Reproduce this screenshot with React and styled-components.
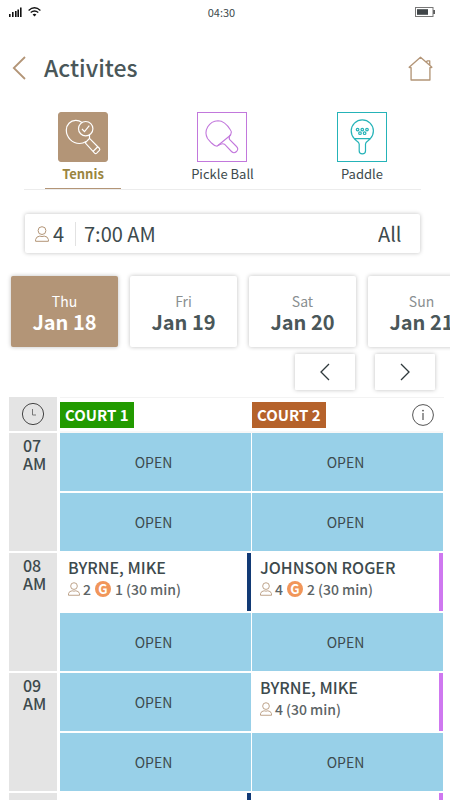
import React from 'react'
import styled, { createGlobalStyle } from 'styled-components'

const GlobalStyle = createGlobalStyle`
  * { box-sizing: border-box; }
  body { margin: 0; background: #fff; color: #3d4a4d; }
  body, button, select {
    font-family: 'Noto Sans CJK SC', 'Noto Sans', sans-serif;
  }
  button { padding: 0; border: 0; background: none; color: inherit; cursor: pointer; }
  svg { display: block; flex: none; }
`

const Screen = styled.div`
  display: flex;
  flex-direction: column;
  height: 100vh;
  overflow: hidden;
`

const StatusBar = styled.div`
  display: grid;
  grid-template-columns: 1fr auto 1fr;
  align-items: center;
  height: 24px;
  padding: 0 15px 0 8px;
  font-size: 11px;
  line-height: 16px;
  flex: none;
`

const Signals = styled.div`
  display: flex;
  align-items: center;
  gap: 6px;
`

const Battery = styled.div`
  justify-self: end;
`

const Header = styled.header`
  display: flex;
  align-items: center;
  gap: 16px;
  height: 88px;
  padding: 0 17px 0 12px;
  flex: none;
`

const IconButton = styled.button`
  color: ${props => props.$color || '#b39577'};
`

const Title = styled.h1`
  flex: 1;
  margin: 0;
  padding-bottom: 3px;
  font-size: 23px;
  line-height: 32px;
  font-weight: 500;
  color: #4a5759;
`

const Tabs = styled.nav`
  display: grid;
  grid-template-columns: repeat(3, 1fr);
  margin: 0 29px 0 24px;
  border-bottom: 1px solid #ececec;
  flex: none;
`

const Tab = styled.button`
  display: flex;
  flex-direction: column;
  align-items: center;
  justify-self: ${props => props.$align};
  width: ${props => (props.$align === 'center' ? '100px' : '118px')};
  height: 77px;
  font-size: 13px;
  line-height: 23px;
  font-weight: ${props => (props.$active ? 700 : 400)};
  color: ${props => (props.$active ? '#9a8540' : '#3d4a4d')};
`

const TabIcon = styled.span`
  width: 50px;
  height: 50px;
  border: 1px solid ${props => props.$color};
  border-radius: ${props => (props.$active ? '3px' : '0')};
  background: ${props => (props.$active ? props.$color : '#fff')};
  color: ${props => (props.$active ? '#fff' : props.$color)};
`

const TabLine = styled.span`
  width: 76px;
  height: 1px;
  margin-top: 3px;
  background: ${props => (props.$active ? '#b39577' : 'transparent')};
`

const Filters = styled.form`
  display: flex;
  align-items: center;
  height: 39px;
  margin: 24px 30px 0 25px;
  padding: 0 18px 0 10px;
  border-radius: 2px;
  box-shadow: 0 0 4px rgba(0, 0, 0, 0.25);
  flex: none;
`

const Field = styled.label`
  display: flex;
  align-items: center;
  gap: 4px;
  padding-right: 10px;
  color: #b39577;
`

const Select = styled.select`
  appearance: none;
  padding: 0;
  border: 0;
  background: none;
  color: #3d4a4d;
  font-size: 20px;
  line-height: 24px;
`

const TimeSelect = styled(Select)`
  padding-left: 8px;
  border-left: 1px solid #e2e2e2;
`

const TypeSelect = styled(Select)`
  margin-left: auto;
`

const Days = styled.div`
  display: flex;
  gap: 12px;
  margin-top: 19px;
  padding: 4px 11px;
  overflow-x: auto;
  scrollbar-width: none;
  flex: none;
`

const Day = styled.button`
  display: flex;
  flex-direction: column;
  align-items: center;
  justify-content: center;
  flex: 0 0 107px;
  height: 71px;
  border-radius: 2px;
  box-shadow: 0 0 4px rgba(0, 0, 0, 0.25);
  background: ${props => (props.$active ? '#b39577' : '#fff')};
  color: ${props => (props.$active ? '#fff' : '#4a5759')};
`

const DayName = styled.span`
  font-size: 14px;
  line-height: 20px;
  color: ${props => (props.$active ? '#fff' : '#8a8f91')};
`

const DayDate = styled.span`
  font-size: 20px;
  line-height: 22px;
  font-weight: 700;
`

const Pager = styled.div`
  display: flex;
  justify-content: flex-end;
  gap: 20px;
  margin: 3px 15px 7px 0;
  flex: none;
`

const PagerButton = styled.button`
  display: flex;
  align-items: center;
  justify-content: center;
  width: 60px;
  height: 36px;
  border-radius: 1px;
  box-shadow: 0 0 4px rgba(0, 0, 0, 0.25);
`

const Schedule = styled.div`
  flex: 1;
  min-height: 0;
  padding: 0 6px 0 9px;
  overflow-y: auto;
  scrollbar-width: none;
`

const Table = styled.table`
  width: 100%;
  table-layout: fixed;
  border-collapse: separate;
  border-spacing: 0;
  th, td { padding: 0; text-align: left; }
`

const TimeCol = styled.col`
  width: 51px;
`

const TimeHead = styled.th`
  height: 36px;
  border-right: 3px solid #fff;
  border-bottom: 2px solid #fff;
  background: #e4e4e4;
  svg { margin: 0 auto; }
`

const CourtHead = styled.th`
  border-top: 1px solid #f3f3f3;
  border-bottom: 2px solid #f8f8f8;
`

const CourtBar = styled.div`
  display: flex;
  align-items: center;
  justify-content: space-between;
  padding-right: 9px;
`

const CourtName = styled.span`
  padding: 0 5px;
  background: ${props => props.$color};
  color: #fff;
  font-size: 15px;
  line-height: 26px;
  font-weight: 700;
`

const HourCell = styled.th`
  height: 60px;
  border-right: 3px solid #fff;
  border-bottom: 2px solid #fff;
  background: #e4e4e4;
  vertical-align: top;
`

const Hour = styled.div`
  width: 40px;
  padding: 3px 0 0 14px;
  font-size: 16px;
  line-height: 18px;
  font-weight: 500;
`

const SlotCell = styled.td`
  height: 60px;
  border-right: 1px solid #fff;
  border-bottom: 2px solid #fff;
`

const OpenSlot = styled.button`
  display: block;
  width: 100%;
  height: 58px;
  padding-right: 4px;
  background: #98d0e8;
  font-size: 14px;
  line-height: 20px;
`

const Booking = styled.div`
  height: 58px;
  padding: 4px 0 0 8px;
  border-right: 4px solid ${props => props.$color};
`

const Player = styled.div`
  font-size: 16px;
  line-height: 21px;
  font-weight: 500;
`

const Details = styled.div`
  display: flex;
  align-items: center;
  gap: 3px;
  font-size: 14px;
  line-height: 22px;
  font-weight: 500;
  color: #5c6466;
  svg { color: #b39577; }
`

const GuestMark = styled.span`
  width: 16px;
  height: 16px;
  margin: 0 1px;
  border-radius: 50%;
  background: #f1965a;
  color: #fff;
  font-size: 13px;
  line-height: 16px;
  font-weight: 700;
  text-align: center;
`

const SignalIcon = () => (
  <svg width="14" height="10" viewBox="0 0 14 10" fill="#111">
    <path d="M1 7h1.6v3H1zM4 5h1.6v5H4zM7 4h1.6v6H7zM9.4 2.4H11V10H9.4zM12 .5h1.6V10H12z" />
  </svg>
)

const WifiIcon = () => (
  <svg width="13" height="10" viewBox="0 0 13 10" fill="none" stroke="#111" strokeWidth="1.3">
    <path d="M.6 3.4Q6.5-1.8 12.4 3.4M2.7 5.6Q6.5 2.4 10.3 5.6" />
    <path d="M4.6 7.5Q6.5 5.8 8.4 7.5L6.5 9.4z" fill="#111" stroke="none" />
  </svg>
)

const BatteryIcon = () => (
  <svg width="20" height="10" viewBox="0 0 20 10">
    <rect x=".5" y=".5" width="17.5" height="9" fill="#fff" stroke="#777" />
    <path d="M2 2.2h11v5.6H2z" fill="#3f4548" />
    <path d="M18.4 3h1.4v4h-1.4z" fill="#333" />
  </svg>
)

const BackIcon = () => (
  <svg width="16" height="24" viewBox="0 0 16 24" fill="none" stroke="currentColor" strokeWidth="1.8">
    <path d="M13 1L1.8 12 13 23" />
  </svg>
)

const HomeIcon = () => (
  <svg width="25" height="25" viewBox="0 0 26 26" fill="none" stroke="currentColor" strokeWidth="1.4" strokeLinejoin="round">
    <path d="M13 1.200L19 6.600L20 5H22.600V9.600L24.800 11.700L22.800 12.200V25H3.200V12.200L1.200 11.700Z" />
    <path d="M19 6.600L22.600 9.600" />
  </svg>
)

const PersonIcon = ({ size }) => (
  <svg width={size} height={size + 2} viewBox="0 0 14 16" fill="none" stroke="currentColor" strokeWidth="1">
    <circle cx="7" cy="4.6" r="3.9" />
    <path d="M.6 15.3v-1.8Q1.2 10.4 4.8 10.1Q7 11 9.2 10.1Q12.8 10.4 13.4 13.5v1.8z" strokeLinejoin="round" />
  </svg>
)

const ChevronIcon = ({ d }) => (
  <svg width="12" height="18" viewBox="0 0 12 18" fill="none" stroke="#2f393c" strokeWidth="1.3">
    <path d={d} />
  </svg>
)

const ClockIcon = () => (
  <svg width="24" height="24" viewBox="0 0 24 24" fill="none" stroke="#444" strokeWidth="1">
    <circle cx="12" cy="12" r="10.6" />
    <path d="M11.5 7v6H15" stroke="#777" />
  </svg>
)

const InfoIcon = () => (
  <svg width="24" height="24" viewBox="0 0 24 24" fill="none" stroke="currentColor" strokeWidth="1">
    <circle cx="12" cy="12" r="10.4" />
    <path d="M12 10V17" strokeWidth="1.2" />
    <circle cx="12" cy="7.6" r=".9" fill="currentColor" stroke="none" />
  </svg>
)

const TennisIcon = () => (
  <svg width="48" height="48" viewBox="0 0 48 48" fill="none" stroke="currentColor" strokeWidth="1.2">
    <circle cx="26.7" cy="15.7" r="7.2" />
    <path d="M23 16l2.500 2.600 4.800-6" />
    <path d="M23 9.500C21 8 19 7.300 16.500 7.400C11.500 7.600 7.300 11.500 7.300 17C7.300 24.500 13.500 30.500 20.500 30.500C23.500 30.500 25.500 29.500 27 28.500" />
    <path d="M30.500 21.800V25.300L40.500 35.500Q41.200 36.500 40.400 37.400L37.700 40.100Q36.600 41 35.600 40.100L26.200 29.800L30.500 25.300M34.200 38.200L38.800 33.800" />
  </svg>
)

const PickleIcon = () => (
  <svg width="48" height="48" viewBox="0 0 48 48" fill="none" stroke="currentColor" strokeWidth="1.1">
    <path d="M19 33.200C16.500 33 15 31.500 13.500 30L9.500 25.500A12.500 12.200 0 0 1 20 7.700C26 7.700 29.500 12 32.500 17Q34 19 33 20.500Q33 22 31.500 23L19 33.200" />
    <path d="M20 32.500Q24 30 26.500 31.200L33.500 38.500Q36 41 38.500 38.500Q41 36 38.500 33.500L31.500 26.500Q30.500 24.500 32.500 21.500" />
  </svg>
)

const PaddleIcon = () => (
  <svg width="48" height="48" viewBox="0 0 48 48" fill="none" stroke="currentColor" strokeWidth="1.2">
    <path d="M21.200 38V31Q21 29.500 18.500 27.800L16.300 25.700A11.100 11.100 0 1 1 32.300 25.700L30 27.800Q27.600 29.500 27.500 31V38Q27.500 40.800 24.300 40.800Q21.200 40.800 21.200 38ZM16.300 25.700H32.300" />
    <circle cx="19.6" cy="16.600" r="1.300" />
    <circle cx="24.3" cy="16.600" r="1.300" />
    <circle cx="29" cy="16.600" r="1.300" />
    <circle cx="22" cy="20.200" r="1.300" />
    <circle cx="26.600" cy="20.200" r="1.300" />
  </svg>
)

const sports = [
  { name: 'Tennis', color: '#b39577', align: 'start', icon: <TennisIcon />, active: true },
  { name: 'Pickle Ball', color: '#c278dc', align: 'center', icon: <PickleIcon /> },
  { name: 'Paddle', color: '#25b3b8', align: 'end', icon: <PaddleIcon /> }
]

const days = [
  { name: 'Thu', date: 'Jan 18', active: true },
  { name: 'Fri', date: 'Jan 19' },
  { name: 'Sat', date: 'Jan 20' },
  { name: 'Sun', date: 'Jan 21' }
]

const navy = '#123a75'
const violet = '#cf78f0'

const rows = [
  { hour: '07', slots: [null, null] },
  { slots: [null, null] },
  {
    hour: '08',
    slots: [
      { player: 'BYRNE, MIKE', count: 2, guests: 1, color: navy },
      { player: 'JOHNSON ROGER', count: 4, guests: 2, color: violet }
    ]
  },
  { slots: [null, null] },
  { hour: '09', slots: [null, { player: 'BYRNE, MIKE', count: 4, color: violet }] },
  { slots: [null, null] },
  {
    hour: '10',
    slots: [
      { player: 'BYRNE, MIKE', count: 2, color: navy },
      { player: 'JOHNSON ROGER', count: 4, color: violet }
    ]
  },
  { slots: [null, null] }
]

const Slot = ({ booking }) => {
  if (!booking) return <OpenSlot type="button">OPEN</OpenSlot>
  const { player, count, guests, color } = booking
  return (
    <Booking $color={color}>
      <Player>{player}</Player>
      <Details>
        <PersonIcon size={12} />
        <span>{count}</span>
        {guests && <GuestMark>G</GuestMark>}
        {guests && <span>{guests}</span>}
        <span>(30 min)</span>
      </Details>
    </Booking>
  )
}

const App = () => (
  <Screen>
    <GlobalStyle />
    <StatusBar>
      <Signals><SignalIcon /><WifiIcon /></Signals>
      <span>04:30</span>
      <Battery><BatteryIcon /></Battery>
    </StatusBar>
    <Header>
      <IconButton type="button" aria-label="Back"><BackIcon /></IconButton>
      <Title>Activites</Title>
      <IconButton type="button" aria-label="Home"><HomeIcon /></IconButton>
    </Header>
    <Tabs>
      {sports.map(({ name, color, align, icon, active }) => (
        <Tab type="button" key={name} $align={align} $active={active}>
          <TabIcon $color={color} $active={active}>{icon}</TabIcon>
          {name}
          <TabLine $active={active} />
        </Tab>
      ))}
    </Tabs>
    <Filters>
      <Field>
        <PersonIcon size={14} />
        <Select aria-label="Players"><option>4</option></Select>
      </Field>
      <TimeSelect aria-label="Time"><option>7:00 AM</option></TimeSelect>
      <TypeSelect aria-label="Type"><option>All</option></TypeSelect>
    </Filters>
    <Days>
      {days.map(({ name, date, active }) => (
        <Day type="button" key={name} $active={active}>
          <DayName $active={active}>{name}</DayName>
          <DayDate>{date}</DayDate>
        </Day>
      ))}
    </Days>
    <Pager>
      <PagerButton type="button" aria-label="Previous"><ChevronIcon d="M10 1L2 9l8 8" /></PagerButton>
      <PagerButton type="button" aria-label="Next"><ChevronIcon d="M2 1l8 8-8 8" /></PagerButton>
    </Pager>
    <Schedule>
      <Table>
        <colgroup><TimeCol /><col /><col /></colgroup>
        <thead>
          <tr>
            <TimeHead aria-label="Time"><ClockIcon /></TimeHead>
            <CourtHead>
              <CourtBar><CourtName $color="#229a00">COURT 1</CourtName></CourtBar>
            </CourtHead>
            <CourtHead>
              <CourtBar>
                <CourtName $color="#b5622b">COURT 2</CourtName>
                <IconButton type="button" aria-label="Info" $color="#555"><InfoIcon /></IconButton>
              </CourtBar>
            </CourtHead>
          </tr>
        </thead>
        <tbody>
          {rows.map(({ hour, slots }, i) => (
            <tr key={i}>
              {hour && <HourCell rowSpan={2}><Hour>{hour} AM</Hour></HourCell>}
              {slots.map((booking, j) => (
                <SlotCell key={j}><Slot booking={booking} /></SlotCell>
              ))}
            </tr>
          ))}
        </tbody>
      </Table>
    </Schedule>
  </Screen>
)

export default App
